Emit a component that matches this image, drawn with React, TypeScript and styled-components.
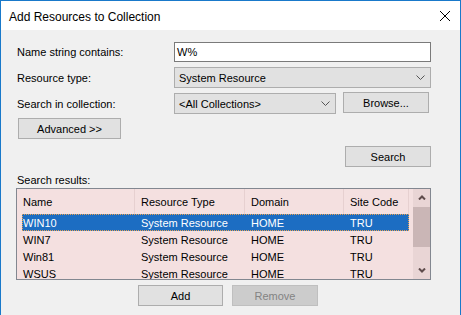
import styled, { createGlobalStyle } from "styled-components";

const GlobalStyle = createGlobalStyle`
  body {
    margin: 0;
    background: #ffffff;
    font-family: "Liberation Sans", Arial, sans-serif;
    font-size: 11px;
    color: #000;
  }
`;

const Window = styled.div`
  width: 461px;
  height: 315px;
  box-sizing: border-box;
  border: 1px solid #1979ca;
  border-bottom: none;
  background: #f0f0f0;
  display: flex;
  flex-direction: column;
  overflow: hidden;
`;

const TitleBar = styled.div`
  height: 29px;
  background: #ffffff;
  display: flex;
  align-items: center;
  justify-content: space-between;
  padding: 0 9px 0 8px;
  flex-shrink: 0;
`;

const Title = styled.span`
  font-family: "Liberation Sans", Arial, sans-serif;
  font-size: 12px;
  color: #000;
  margin-top: 2px;
`;

const Body = styled.div`
  padding: 12px 29px 0 15px;
  display: flex;
  flex-direction: column;
`;

const FieldRow = styled.div<{ $top: number }>`
  display: flex;
  align-items: center;
  margin-top: ${(p) => p.$top}px;
`;

const Label = styled.span`
  width: 157px;
  padding-left: 1px;
  flex-shrink: 0;
`;

const TextBox = styled.div`
  flex: 1;
  height: 20px;
  box-sizing: border-box;
  background: #ffffff;
  border: 1px solid #7a7a7a;
  padding-left: 2px;
  display: flex;
  align-items: center;
`;

const Combo = styled.div<{ $width?: number }>`
  ${(p) => (p.$width ? `width: ${p.$width}px;` : "flex: 1;")}
  height: 21px;
  box-sizing: border-box;
  background: #e1e1e1;
  border: 1px solid #adadad;
  padding: 0 5px 0 4px;
  display: flex;
  align-items: center;
  justify-content: space-between;
`;

const Button = styled.button<{ $width: number; $disabled?: boolean }>`
  width: ${(p) => p.$width}px;
  height: 21px;
  box-sizing: border-box;
  background: ${(p) => (p.$disabled ? "#cccccc" : "#e1e1e1")};
  border: 1px solid ${(p) => (p.$disabled ? "#bfbfbf" : "#adadad")};
  color: ${(p) => (p.$disabled ? "#838383" : "#000")};
  font-family: "Liberation Sans", Arial, sans-serif;
  font-size: 11px;
  padding: 0;
  flex-shrink: 0;
`;

const BrowseButton = styled(Button)`
  margin-left: 7px;
  align-self: flex-start;
  margin-top: -1px;
`;

const AdvancedButton = styled(Button)`
  margin: 4px 0 0 2px;
`;

const SearchRow = styled.div`
  display: flex;
  justify-content: flex-end;
  margin-top: 7px;
`;

const SectionLabel = styled.div`
  margin: 7px 0 0 1px;
  line-height: 13px;
`;

const ListView = styled.div`
  margin-top: 1px;
  height: 92px;
  box-sizing: border-box;
  border: 1px solid #828790;
  background: #f4e0e0;
  display: flex;
`;

const ListArea = styled.div`
  flex: 1;
  overflow: hidden;
`;

const HeaderRow = styled.div`
  display: grid;
  grid-template-columns: 118px 110px 99px 65px;
  height: 25px;
`;

const HeaderCell = styled.div`
  border-right: 1px solid #e6d0d0;
  padding-left: 6px;
  display: flex;
  align-items: center;
`;

const ItemRow = styled.div<{ $selected?: boolean }>`
  display: grid;
  grid-template-columns: 113px 110px 99px 65px;
  height: 17px;
  margin-left: 5px;
  width: 387px;
  align-items: center;
  background: ${(p) => (p.$selected ? "#1c6dc2" : "transparent")};
  color: ${(p) => (p.$selected ? "#ffffff" : "#000")};
  outline: ${(p) => (p.$selected ? "1px dotted #e8a050" : "none")};
  outline-offset: -1px;
  white-space: nowrap;
`;

const ItemCell = styled.span<{ $first?: boolean }>`
  padding-left: ${(p) => (p.$first ? 1 : 6)}px;
`;

const ScrollBar = styled.div`
  width: 17px;
  background: #e9d5d5;
  display: flex;
  flex-direction: column;
  flex-shrink: 0;
`;

const ScrollArrow = styled.div`
  height: 17px;
  display: flex;
  align-items: center;
  justify-content: center;
`;

const ScrollThumb = styled.div`
  height: 40px;
  background: #cab6b6;
  margin-top: 1px;
`;

const ScrollTrack = styled.div`
  flex: 1;
`;

const ButtonBar = styled.div`
  display: flex;
  gap: 9px;
  margin: 5px 0 0 122px;
`;

const Chevron = () => (
  <svg width="9" height="5" viewBox="0 0 9 5">
    <path d="M0.5 0.5 L4.5 4.5 L8.5 0.5" fill="none" stroke="#555" strokeWidth="1" />
  </svg>
);

const ArrowGlyph = ({ up }: { up?: boolean }) => (
  <svg width="8" height="5" viewBox="0 0 8 5">
    <path
      d={up ? "M1 4.5 L4 1.5 L7 4.5" : "M1 0.5 L4 3.5 L7 0.5"}
      fill="none"
      stroke="#5e4c4c"
      strokeWidth="2"
    />
  </svg>
);

const CloseIcon = () => (
  <svg width="12" height="12" viewBox="0 0 12 12">
    <path d="M1 1 L11 11 M11 1 L1 11" stroke="#000" strokeWidth="1" />
  </svg>
);

const columns = ["Name", "Resource Type", "Domain", "Site Code"];

const items = [
  { name: "WIN10", type: "System Resource", domain: "HOME", site: "TRU" },
  { name: "WIN7", type: "System Resource", domain: "HOME", site: "TRU" },
  { name: "Win81", type: "System Resource", domain: "HOME", site: "TRU" },
  { name: "WSUS", type: "System Resource", domain: "HOME", site: "TRU" },
];

const App = () => {
  return (
    <>
      <GlobalStyle />
      <Window>
        <TitleBar>
          <Title>Add Resources to Collection</Title>
          <CloseIcon />
        </TitleBar>
        <Body>
          <FieldRow $top={0}>
            <Label>Name string contains:</Label>
            <TextBox>W%</TextBox>
          </FieldRow>
          <FieldRow $top={5}>
            <Label>Resource type:</Label>
            <Combo>
              System Resource
              <Chevron />
            </Combo>
          </FieldRow>
          <FieldRow $top={5}>
            <Label>Search in collection:</Label>
            <Combo $width={162}>
              &lt;All Collections&gt;
              <Chevron />
            </Combo>
            <BrowseButton $width={86}>Browse...</BrowseButton>
          </FieldRow>
          <AdvancedButton $width={103}>Advanced &gt;&gt;</AdvancedButton>
          <SearchRow>
            <Button $width={86}>Search</Button>
          </SearchRow>
          <SectionLabel>Search results:</SectionLabel>
          <ListView>
            <ListArea>
              <HeaderRow>
                {columns.map((c) => (
                  <HeaderCell key={c}>{c}</HeaderCell>
                ))}
              </HeaderRow>
              {items.map((it, i) => (
                <ItemRow key={it.name} $selected={i === 0}>
                  <ItemCell $first>{it.name}</ItemCell>
                  <ItemCell>{it.type}</ItemCell>
                  <ItemCell>{it.domain}</ItemCell>
                  <ItemCell>{it.site}</ItemCell>
                </ItemRow>
              ))}
            </ListArea>
            <ScrollBar>
              <ScrollArrow>
                <ArrowGlyph up />
              </ScrollArrow>
              <ScrollThumb />
              <ScrollTrack />
              <ScrollArrow>
                <ArrowGlyph />
              </ScrollArrow>
            </ScrollBar>
          </ListView>
          <ButtonBar>
            <Button $width={85}>Add</Button>
            <Button $width={86} $disabled>
              Remove
            </Button>
          </ButtonBar>
        </Body>
      </Window>
    </>
  );
};

export default App;
